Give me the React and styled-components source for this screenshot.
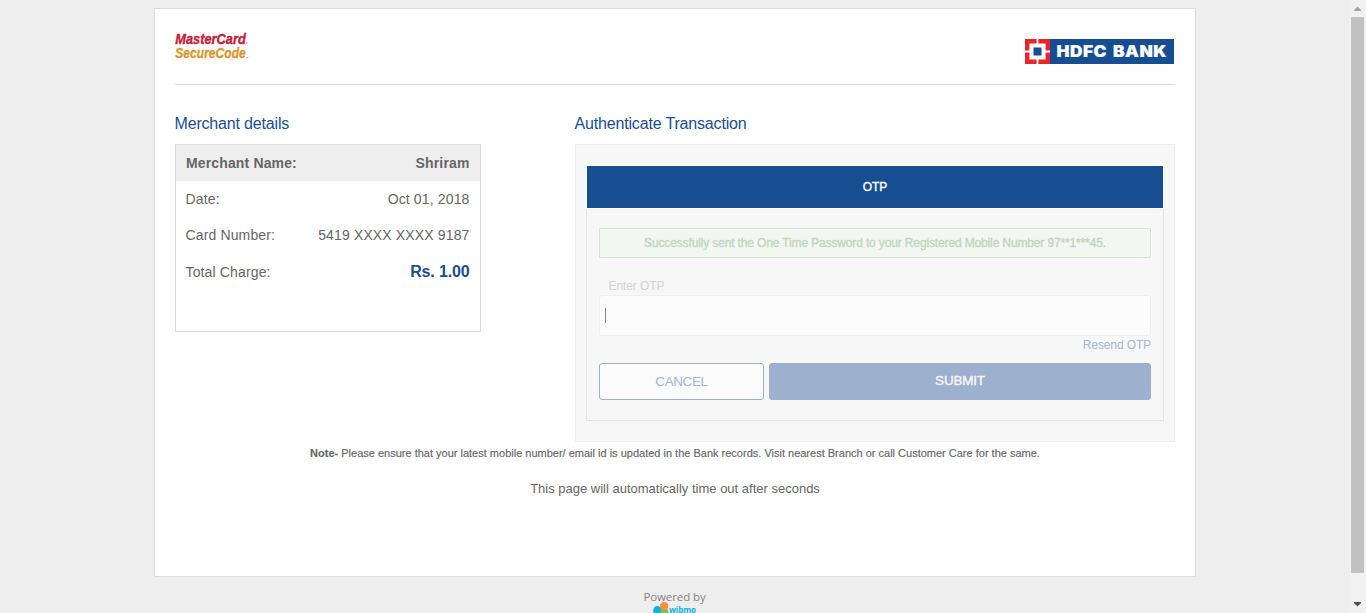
import React from "react";
import styled, { createGlobalStyle } from "styled-components";

const GlobalStyle = createGlobalStyle`
  * { box-sizing: border-box; }
  html, body { margin: 0; padding: 0; overflow: hidden; background: #eeeeee; }
  body { font-family: "Liberation Sans", Arial, sans-serif; color: #666666; }
`;

const Window = styled.div`
  display: flex;
  height: 613px;
  overflow: hidden;
  background: #eeeeee;
`;

const Page = styled.div`
  flex: 1;
  display: flex;
  flex-direction: column;
  align-items: center;
  padding-top: 8px;
`;

const Card = styled.main`
  flex: none;
  width: 1042px;
  height: 569px;
  margin-left: 1px;
  padding: 0 20px;
  border: 1px solid #dcdcdc;
  background: #ffffff;
`;

const Header = styled.header`
  display: flex;
  justify-content: space-between;
  height: 76px;
  border-bottom: 1px solid #dcdcdc;

  svg { display: block; overflow: visible; }
`;

const SecureCodeMark = styled.svg`
  margin-top: 20px;
`;

const BankMark = styled.svg`
  margin-top: 30px;
  margin-right: 1px;
`;

const Columns = styled.div`
  display: flex;
  justify-content: space-between;
  height: 357px;
`;

const Column = styled.section`
  width: ${(p) => p.$width}px;
`;

const Title = styled.h2`
  margin: 0 0 0 -0.5px;
  padding-top: 29px;
  height: 59px;
  font-size: 16px;
  line-height: 19px;
  font-weight: 400;
  letter-spacing: -0.17px;
  color: #174e92;
`;

const Details = styled.dl`
  margin: 0;
  height: 188px;
  border: 1px solid #dcdcdc;
`;

const DetailRow = styled.div`
  display: flex;
  justify-content: space-between;
  align-items: center;
  height: ${(p) => (p.$tall ? 37 : 36)}px;
  padding: 0 10.5px 0 ${(p) => (p.$head ? 10 : 9.5)}px;
  font-size: 14px;
  font-weight: ${(p) => (p.$head ? 700 : 400)};
  letter-spacing: 0.14px;
  background: ${(p) => (p.$head ? "#eeeeee" : "transparent")};

  dd { margin: 0; }
`;

const Amount = styled.strong`
  font-size: 16px;
  letter-spacing: -0.15px;
  color: #174e92;
`;

const AuthPanel = styled.div`
  height: 298px;
  padding: 20px 10px;
  border: 1px solid #eeeeee;
  background: #f7f7f7;
`;

const TabBar = styled.div`
  height: 44px;
  border: 1px solid #ffffff;
  background: #174e92;
  color: #ffffff;
  font-size: 12px;
  -webkit-text-stroke: 0.35px currentColor;
  line-height: 42px;
  text-align: center;
`;

const Form = styled.div`
  height: 212px;
  padding: 19px 12px 0;
  border: 1px solid #e4e4e4;
  border-top: 0;
`;

const Notice = styled.p`
  margin: 0;
  height: 30px;
  border: 1px solid #d2e7cf;
  border-radius: 1px;
  background: #f2f7f1;
  color: #c0d7bc;
  font-size: 12px;
  letter-spacing: -0.14px;
  -webkit-text-stroke: 0.35px currentColor;
  line-height: 28px;
  text-align: center;
`;

const Label = styled.label`
  display: block;
  height: 37px;
  padding: 20px 0 0 9.5px;
  color: #d3d3d3;
  font-size: 12px;
  line-height: 16px;
  letter-spacing: -0.1px;
`;

const Field = styled.div`
  display: flex;
  align-items: center;
  height: 41px;
  padding-left: 5px;
  border: 1px solid #efefef;
  border-radius: 3px;
  background: #fbfbfb;
`;

const Caret = styled.span`
  width: 1px;
  height: 15px;
  background: #858585;
`;

const Resend = styled.div`
  height: 27px;
  padding-top: 1px;
  color: #a2b8d5;
  font-size: 12px;
  line-height: 16px;
  letter-spacing: -0.12px;
  text-align: right;
`;

const Actions = styled.div`
  display: flex;
  gap: 5px;
`;

const Button = styled.button`
  width: ${(p) => (p.$primary ? 382 : 165)}px;
  height: 37px;
  padding: ${(p) => (p.$primary ? "0 0 2px" : "0")};
  border: 1px solid #9db0ce;
  border-radius: 3px;
  background: ${(p) => (p.$primary ? "#9db0ce" : "#fbfbfb")};
  color: ${(p) => (p.$primary ? "#f7f7f7" : "#a2b8d5")};
  font-family: inherit;
  font-size: 13.5px;
  letter-spacing: ${(p) => (p.$primary ? "-0.2px" : "-0.4px")};
  -webkit-text-stroke: ${(p) => (p.$primary ? "0.4px" : "0")} currentColor;
`;

const Note = styled.p`
  margin: 0;
  padding-top: 5px;
  height: 39px;
  font-size: 11px;
  line-height: 13px;
  text-align: center;
  -webkit-text-stroke: 0.15px currentColor;
`;

const Timeout = styled.p`
  margin: 0;
  font-size: 13px;
  line-height: 16px;
  text-align: center;
`;

const Footer = styled.footer`
  display: flex;
  flex-direction: column;
  align-items: center;
  padding-top: 12px;
  font-family: "Open Sans", sans-serif;
  font-size: 11.5px;
  line-height: 15px;
  letter-spacing: -0.1px;
  color: #858585;

  svg { display: block; margin-top: -2px; }
`;

const Scrollbar = styled.div`
  display: flex;
  flex-direction: column;
  align-items: center;
  justify-content: space-between;
  width: 17px;
  background: #f1f1f1;

  svg { display: block; }
`;

const Thumb = styled.div`
  width: 13px;
  height: 556px;
  background: #c1c1c1;
`;

function SecureCodeLogo() {
  return (
    <SecureCodeMark width="76" height="34" viewBox="0 0 76 34">
      <g fontFamily="Liberation Sans, Arial, sans-serif" fontStyle="italic" fontWeight="700" fontSize="14.8">
        <text x="0.3" y="15" textLength="70.5" lengthAdjust="spacingAndGlyphs" fill="#c51c38" stroke="#c51c38" strokeWidth=".4">MasterCard</text>
        <text x="0.3" y="29.3" textLength="70.5" lengthAdjust="spacingAndGlyphs" fill="#dc9529" stroke="#dc9529" strokeWidth=".3">SecureCode</text>
      </g>
      <circle cx="71.8" cy="14" r=".7" fill="#d58290" />
      <rect x="71" y="28" width="2.5" height="1" fill="#e5c397" />
    </SecureCodeMark>
  );
}

function BankLogo() {
  return (
    <BankMark width="149" height="25" viewBox="0 0 149 25">
      <rect width="149" height="25" fill="#174e92" />
      <rect width="25" height="25" fill="#e9252b" />
      <path d="M4.4 4.4h16.2v16.2H4.4zM11.6 0h1.8v25h-1.8zM0 11.6h25v1.8H0z" fill="#fff" />
      <rect x="8.5" y="8.5" width="8" height="8" fill="#174e92" />
      <g fill="#fff" stroke="#fff" strokeWidth=".2" fontFamily="Inter, Liberation Sans, sans-serif" fontWeight="900" fontSize="15.5" letterSpacing=".5">
        <text x="31.5" y="18" textLength="50.5" lengthAdjust="spacingAndGlyphs">HDFC</text>
        <text x="88" y="18" textLength="54" lengthAdjust="spacingAndGlyphs">BANK</text>
      </g>
    </BankMark>
  );
}

function WibmoLogo() {
  return (
    <svg width="44" height="14" viewBox="0 0 44 14">
      <circle cx="4.5" cy="8.5" r="4.4" fill="#08b4de" />
      <circle cx="11.5" cy="10.5" r="4" fill="#80c24b" />
      <circle cx="11.2" cy="4.2" r="4.1" fill="#f4913e" />
      <text x="16" y="10.7" textLength="27" lengthAdjust="spacingAndGlyphs" fill="#08b4de" fontFamily="Open Sans, sans-serif" fontWeight="700" fontSize="8">wibmo</text>
    </svg>
  );
}

export default function App() {
  return (
    <>
      <GlobalStyle />
      <Window>
        <Page>
          <Card>
            <Header>
              <SecureCodeLogo />
              <BankLogo />
            </Header>
            <Columns>
              <Column $width={306}>
                <Title>Merchant details</Title>
                <Details>
                  <DetailRow $head><dt>Merchant Name:</dt><dd>Shriram</dd></DetailRow>
                  <DetailRow><dt>Date:</dt><dd>Oct 01, 2018</dd></DetailRow>
                  <DetailRow><dt>Card Number:</dt><dd>5419 XXXX XXXX 9187</dd></DetailRow>
                  <DetailRow $tall><dt>Total Charge:</dt><dd><Amount>Rs. 1.00</Amount></dd></DetailRow>
                </Details>
              </Column>
              <Column $width={600}>
                <Title>Authenticate Transaction</Title>
                <AuthPanel>
                  <TabBar>OTP</TabBar>
                  <Form>
                    <Notice>Successfully sent the One Time Password to your Registered Mobile Number 97**1***45.</Notice>
                    <Label>Enter OTP</Label>
                    <Field><Caret /></Field>
                    <Resend>Resend OTP</Resend>
                    <Actions>
                      <Button>CANCEL</Button>
                      <Button $primary>SUBMIT</Button>
                    </Actions>
                  </Form>
                </AuthPanel>
              </Column>
            </Columns>
            <Note><b>Note-</b> Please ensure that your latest mobile number/ email id is updated in the Bank records. Visit nearest Branch or call Customer Care for the same.</Note>
            <Timeout>This page will automatically time out after seconds</Timeout>
          </Card>
          <Footer>
            Powered by
            <WibmoLogo />
          </Footer>
        </Page>
        <Scrollbar>
          <svg width="17" height="17"><path d="M5 11v-1l3.5-3.5L12 10v1z" fill="#a3a3a3" /></svg>
          <Thumb />
          <svg width="17" height="40"><path d="M5 29h7v1l-3.5 3.5L5 30z" fill="#505050" /></svg>
        </Scrollbar>
      </Window>
    </>
  );
}
